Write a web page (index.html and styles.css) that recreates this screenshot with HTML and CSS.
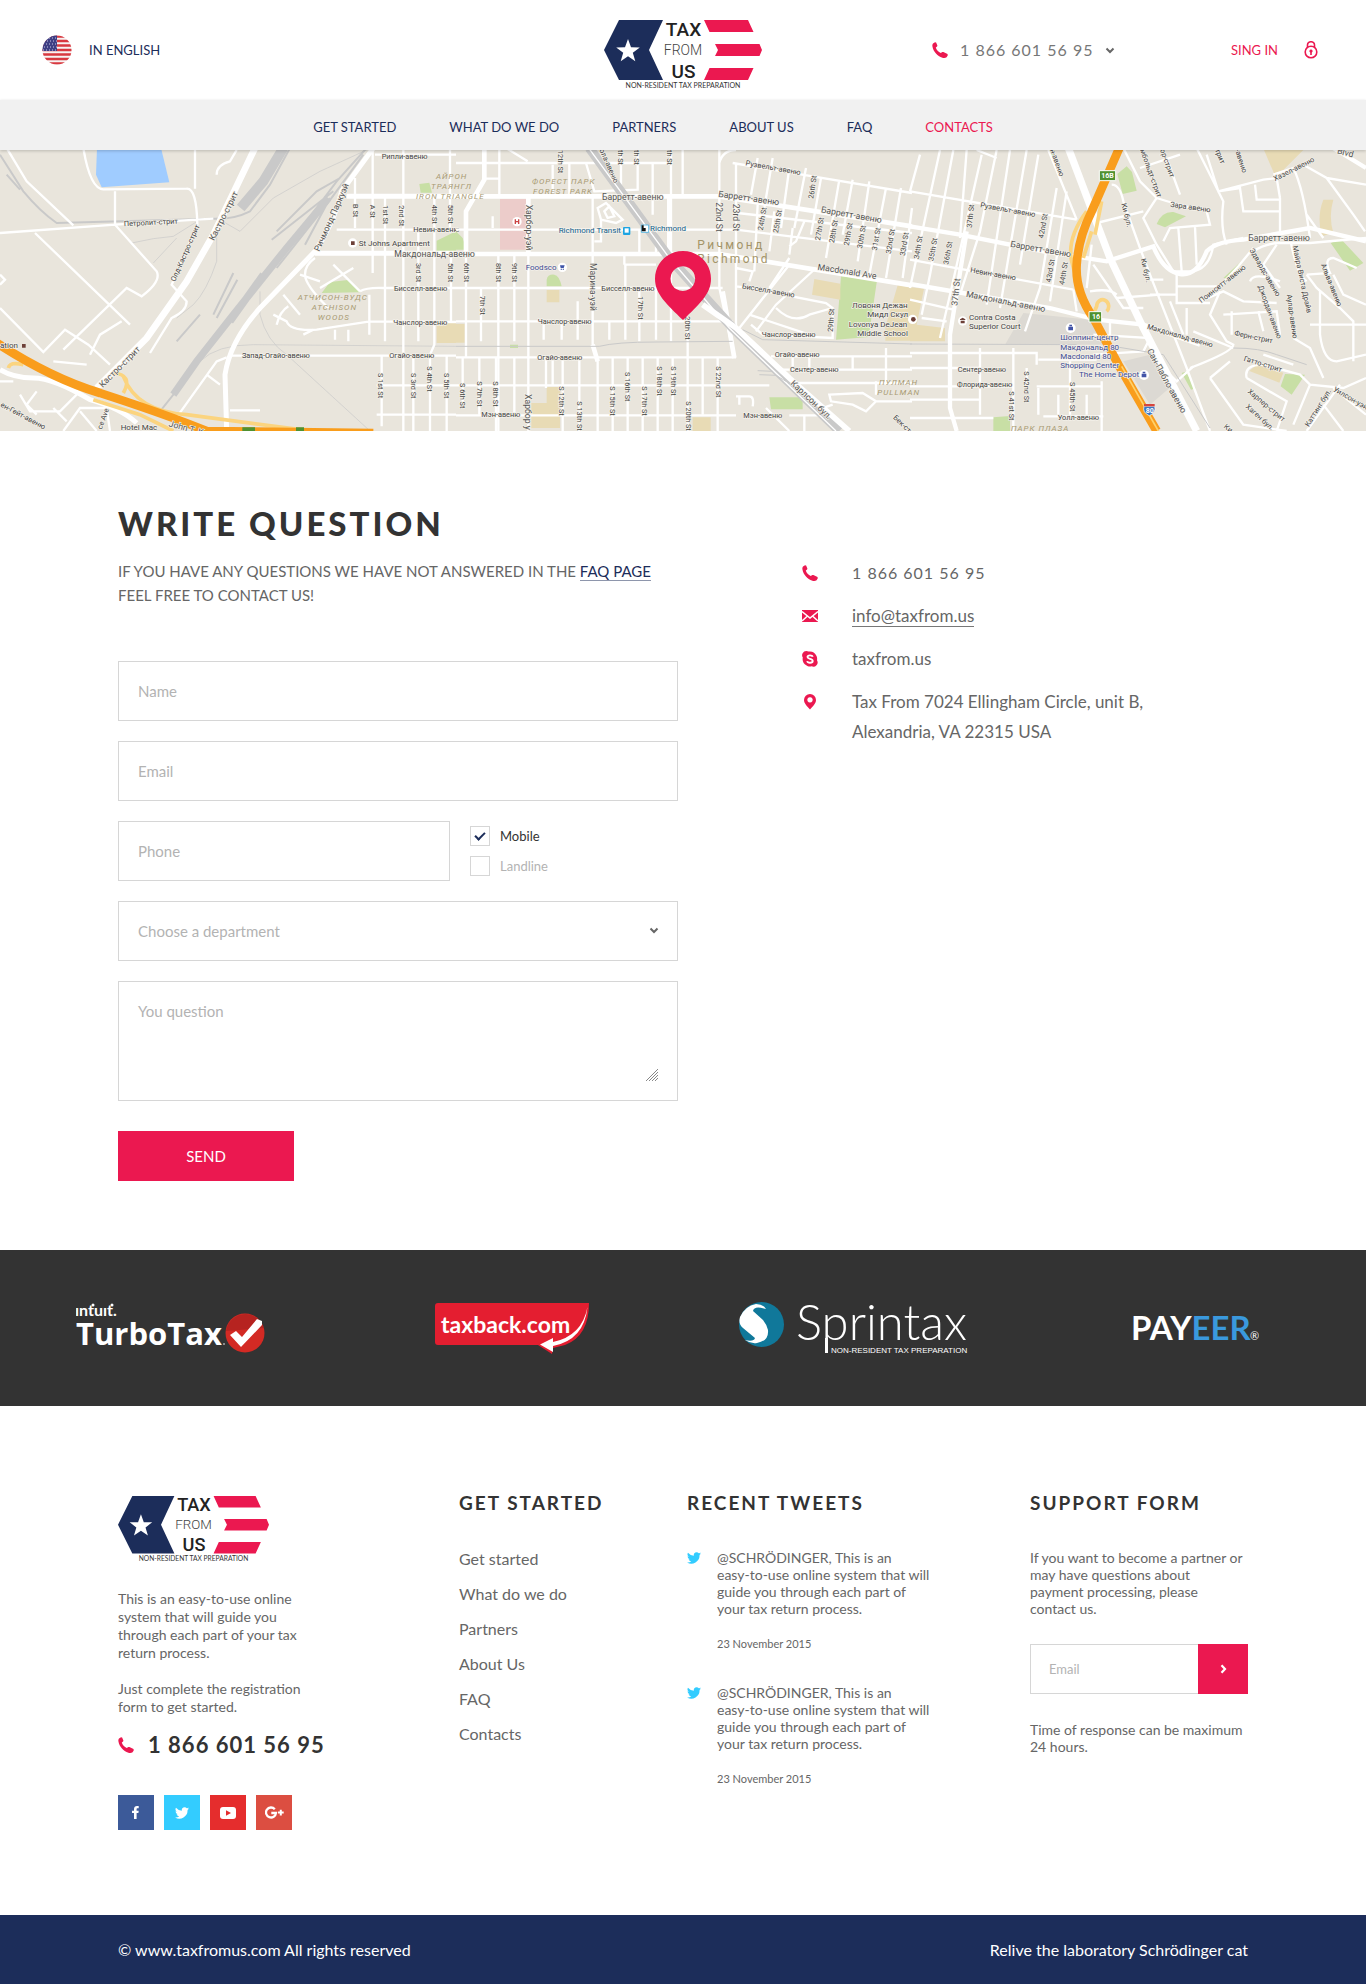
FILE: index.html
```html
<!DOCTYPE html>
<html lang="en">
<head>
<meta charset="utf-8">
<meta name="viewport" content="width=device-width, initial-scale=1">
<title>Tax From Us – Contacts</title>
<link rel="stylesheet" href="styles.css">
</head>
<body>

<svg class="defs" width="0" height="0" aria-hidden="true">
  <symbol id="phone" viewBox="0 0 16 16"><path d="M1 1.600 3 .2l1.100.3 1.300 3-.3 1-1.300 1c.6 2.300 2.600 4.500 5 5.600l1.500-1.200 1.100 0L15.500 12l.3 1.200-1.200 2c-1 .8-2.600 1-4.200.5C5.200 14 1.300 9.500.5 4.800.2 3.500.3 2.500 1 1.600z"/></symbol>
  <symbol id="bird" viewBox="0 0 24 20"><path d="M24 2.400a10 10 0 0 1-2.800.8A5 5 0 0 0 23.300.5a10 10 0 0 1-3.100 1.200 4.900 4.900 0 0 0-8.400 4.500A14 14 0 0 1 1.700 1a4.900 4.900 0 0 0 1.500 6.600A5 5 0 0 1 1 7v.1A4.900 4.900 0 0 0 4.900 12a5 5 0 0 1-2.200.1 4.900 4.900 0 0 0 4.600 3.400A9.900 9.900 0 0 1 0 17.500 14 14 0 0 0 21.500 5A10 10 0 0 0 24 2.400z"/></symbol>
</svg>

<header class="top">
  <a class="lang" href="#">
    <svg width="30" height="30" viewBox="0 0 30 30" aria-hidden="true">
      <clipPath id="round"><circle cx="15" cy="15" r="14.500"/></clipPath>
      <g clip-path="url(#round)">
        <path fill="#f7f3f3" d="M0 0h30v30H0z"/>
        <path stroke="#d8383f" stroke-width="2.300" d="M0 1.500h30M0 6h30M0 10.500h30M0 15h30M0 19.500h30M0 24h30M0 28.500h30"/>
        <path fill="#3e3f84" d="M0 0h15v16H0z"/>
        <path stroke="#c9c9e6" stroke-dasharray="1 2" d="M1 3h14M2 6h13M1 9h14M2 12h13M1 15h14"/>
      </g>
    </svg>
    IN ENGLISH
  </a>
  <a class="brand" href="#" aria-label="Tax From Us">
    <svg width="158" height="70" viewBox="0 0 158 70">
      <g id="logo">
        <path fill="#1c2d5a" d="M15 0H59L45 30 59 60H15L0 30z"/>
        <path fill="#fff" d="M24 19l3 8.300 8.800.2-7 5.300 2.500 8.500-7.300-5-7.300 5 2.500-8.500-7-5.300 8.800-.2z"/>
        <path fill="#eb1850" d="M100 0h44l5.500 12h-44zM111 24h44.500l2.500 6-2.500 6H111l3-6zM105.500 48h44L144 60h-44z"/>
        <text class="logo-strong" x="79.500" y="16" text-anchor="middle">TAX</text>
        <text class="logo-light" x="79" y="35" text-anchor="middle">FROM</text>
        <text class="logo-strong" x="79.500" y="58" text-anchor="middle">US</text>
        <text class="logo-tag" x="79" y="68" text-anchor="middle">NON-RESIDENT TAX PREPARATION</text>
      </g>
    </svg>
  </a>
  <div class="account">
    <a class="call" href="tel:18666015695">
      <svg class="pink" width="16" height="16" aria-hidden="true"><use href="#phone"/></svg>
      1 866 601 56 95
      <svg class="arrow" width="10" height="7" viewBox="0 0 10 7" aria-hidden="true"><path d="M1.500 1.500 5 5l3.500-3.500"/></svg>
    </a>
    <a class="signin" href="#">SING IN
      <svg width="14" height="18" viewBox="0 0 14 18" aria-hidden="true"><g fill="none" stroke="#eb1850" stroke-width="1.600"><circle cx="7" cy="11" r="5.800"/><path d="M3.500 6V4a3.500 3.300 0 0 1 7 0V6"/></g><path fill="#eb1850" d="M7 8.500a1.600 1.600 0 0 1 .8 3V14H6.200V11.500A1.600 1.600 0 0 1 7 8.500z"/></svg>
    </a>
  </div>
</header>

<nav class="menu">
  <a href="#">GET STARTED</a>
  <a href="#">WHAT DO WE DO</a>
  <a href="#">PARTNERS</a>
  <a href="#">ABOUT US</a>
  <a href="#">FAQ</a>
  <a class="current" href="#">CONTACTS</a>
</nav>

<svg class="map" viewBox="0 0 4098 843" preserveAspectRatio="xMidYMid slice" role="img" aria-label="Map of Richmond">
  <rect width="4098" height="843" fill="#e9e5dc"/>
  <!-- west -->
  <g transform="translate(0 -6)">
    <path fill="#a0ccff" d="M291 0H483L508 103 305 118 288 80z"/>
    <path class="park" d="M965 435 990 402 1050 395 1080 433zM1258 108l30-4 8 30h-34zM1310 278l58-28v60h-58z"/>
    <path class="school" d="M1310 525h58v60h-58z"/>
    <g class="rail">
      <path stroke-width="30" d="M850 0 790 100 722 180"/>
      <path stroke-width="6" d="M870 0 810 110 750 190Q700 215 640 212L170 225Q120 190 70 130L0 20M20 80 60 125M1100 0 1010 100 860 300 700 500 560 690 480 790M1090 20 980 170 830 360M1000 130 815 275M990 150 915 290M1020 90 950 130 830 250M700 375 640 500M712 395 650 510M530 580 600 500"/>
      <path stroke-width="22" d="M985 150 860 300 700 500 590 640 520 740M790 380 690 520"/>
      <path stroke-width="2" d="M1100 6 960 70 820 150 720 250 650 210 650 340Q620 430 580 470L530 510M395 285 460 272 520 265 600 215M460 345 530 270M780 430V500Q800 580 860 620L1110 849M600 640Q650 590 760 590L1368 595"/>
    </g>
    <g class="road">
      <path d="M0 255 345 230 640 212M20 0 80 100 220 232M250 0Q270 122 310 124L560 122Q590 120 592 230L515 410 560 460Q560 490 515 510L450 615M585 6V122M345 130V230L470 370Q485 400 425 445L380 420 190 605M105 255 390 530M0 480 130 612 195 545 265 590 330 650M160 640 260 650M365 520 300 560 270 620M0 380 15 395 0 410M650 80Q650 50 690 40L710 6"/>
      <path d="M945 330Q915 350 915 380T985 480M960 400 900 380M1000 350 1080 430M1060 360 960 420M850 440 900 500M820 500 860 520Q870 550 950 545L1110 520 1368 522M940 545 910 560M865 475Q840 490 830 530M1108 440V560M1045 545V580M1005 545V575M1080 430Q1100 418 1150 420H1368"/>
      <path d="M1040 145H1368M1010 245H1368M690 623H1368M1130 712H1368M1130 800H1368M1125 20H1368M1065 90V240M1118 6V375M1155 145V580M1210 6V849M1255 245V580M1303 145V590L1290 620V849M1350 6V250M1353 320V520M1145 623V835M1240 623V849M1340 623V849M620 680 660 710M525 815 650 640 680 628M690 787H780"/>
      <path d="M110 730 80 770 110 800M60 740 90 790 180 790 230 740M190 849 240 780 320 780M240 790 290 849M0 700 40 700M160 780 200 820M320 780 330 849"/>
    </g>
    <path class="main" stroke-width="20" d="M765 0 640 260 560 400 440 570 290 720"/>
    <path class="main" stroke-width="15" d="M1120 0 1025 130Q1005 220 945 310L780 480Q690 580 675 680L680 849M0 665Q40 690 100 690T270 755Q360 780 410 825M945 316H1368M1040 145H1368"/>
    <path class="ramp" d="M340 675Q400 680 370 735M370 685Q410 790 560 800L900 845M25 660Q30 640 70 650M280 755 420 800 520 849"/>
    <path class="freeway" d="M-20 578Q150 690 300 735 500 800 620 849L1120 855"/>
    <path fill="#4f9130" d="M727 838h38v18h-38zM888 838h24v18h-24z"/>
    <circle cx="1058" cy="285" r="14" fill="#fff"/><path fill="#6d4038" d="M1053 280h11v11h-11zM66 588h11v11H66z"/>
    <g class="label">
      <text x="372" y="235" transform="rotate(-3 372 235)">Петролит-стрит</text>
      <text x="1145" y="32">Рипли-авеню</text>
      <text x="1240" y="253">Невин-авеню</text>
      <text x="1182" y="428">Бисселл-авеню</text>
      <text x="1180" y="530">Чанслор-авеню</text>
      <text x="726" y="631">Запад-Огайо-авеню</text>
      <text x="1168" y="631">Огайо-авеню</text>
      <text transform="translate(525 402) rotate(-66)">Олд-Кастро-стрит</text>
      <text transform="translate(0 775) rotate(28)">ен-Гейт-авеню</text>
      <text transform="translate(305 845) rotate(-70)">ce Ave</text>
      <text transform="translate(1058 168) rotate(90)">B St</text>
      <text transform="translate(1111 170) rotate(90)">A St</text>
      <text transform="translate(1148 172) rotate(90)">1st St</text>
      <text transform="translate(1197 172) rotate(90)">2nd St</text>
      <text transform="translate(1297 170) rotate(90)">4th St</text>
      <text transform="translate(1345 170) rotate(90)">5th St</text>
      <text transform="translate(1247 345) rotate(90)">3rd St</text>
      <text transform="translate(1345 345) rotate(90)">5th St</text>
      <text transform="translate(1135 675) rotate(90)">S 1st St</text>
      <text transform="translate(1233 675) rotate(90)">S 3rd St</text>
      <text transform="translate(1282 655) rotate(90)">S 4th St</text>
      <text transform="translate(1332 675) rotate(90)">S 5th St</text>
    </g>
    <g class="label big">
      <text transform="translate(642 280) rotate(-63)">Кастро-стрит</text>
      <text transform="translate(308 720) rotate(-45)">Кастро-стрит</text>
      <text transform="translate(958 312) rotate(-66)">Ричмонд-Паркуэй</text>
      <text transform="translate(505 835) rotate(15)">John T. K</text>
    </g>
    <g class="label poi">
      <text x="1076" y="293">St Johns Apartment</text>
      <text x="0" y="600">ation</text>
      <text x="362" y="845">Hotel Mac</text>
    </g>
    <g class="area">
      <text x="893" y="456">АТЧИСОН-ВУДС</text>
      <text x="935" y="486">ATCHISON</text>
      <text x="953" y="516">WOODS</text>
    </g>
  </g>
  <!-- centre -->
  <g transform="translate(1368 -6)">
    <path fill="#ecccca" d="M132 153h78v152h-78z"/>
    <path class="park" d="M272 415V395Q275 378 295 380 310 382 317 415zM0 250 20 270 32 305H0zM162 590h24v10h-24zM1155 385l108 12-25 170-98 8zM940 748h100v36H945z"/>
    <path class="school" d="M272 426h38v37h-38zM0 528h26v56H0zM226 765h46v-48h40v123h-86zM710 808h54v41h-54zM1075 393l78 14v48l-85-15zM1325 412l43 6v160h-80v-40z"/>
    <g class="road">
      <path d="M0 45H650M0 245H850M0 420H800M0 520H830M0 628H840M0 712H940M0 802H840M85 92H130M110 205V240M150 0 215 40"/>
      <path d="M130 6V145M30 330V628M75 420V580M127 318V849M175 318V580M217 170V849M263 520V575M317 520V575M365 460V575M460 520V575M508 350V575M550 420V580M600 420V575M645 6V580M695 520V849M290 50V140M340 45V145M390 45 415 130 545 125V6M495 6V120M590 45V200M680 6V145"/>
      <path d="M20 628V780M70 628V800M120 628V849M175 628V800M270 628V720M290 628V712M320 628V849M370 628V849M470 628V849M515 628V849M560 628V849M605 628V849M650 628V849M740 628V800M785 628V849"/>
      <path d="M410 145V590L425 640V849M505 350H600M435 215 425 180 450 165 500 215 480 225 435 215V280H415M455 210 445 190 460 175 475 205zM505 318V350M550 245V318M600 245V318"/>
      <path d="M790 6V420L835 628M840 45V540M790 45Q800 6 840 6M830 45 1368 135M845 195 1368 255M840 245 1368 310M840 415 880 420 1110 465 1130 480V570L920 560 885 530M840 360 890 370 880 400M905 30 885 140M950 30 925 180M1000 60 975 240M1050 60 1015 240M1095 90 1065 260M1150 95 1110 330M1190 95 1160 260M1240 100 1205 340M1290 120 1240 380M1335 120 1290 390M1368 180 1340 390M1045 220 1020 280 1000 295M905 170 895 370M955 190 940 310M1010 240 1000 320"/>
      <path d="M850 540 1000 350M900 550 960 470 1080 360M960 480Q1010 530 1060 500L1130 480M940 420 1000 330M880 500 1060 560M945 625H1368M945 665H1368M1000 705H1368M1010 625V660M1060 625V660M1190 625V665M1290 600V710M840 745H880Q895 745 890 775M850 745V770M1120 740 1220 735 1260 760 1230 790 1190 770 1125 760zM1260 760H1368M1070 790 1130 770M1260 700V740M930 780 1000 849M1000 802H1100M1045 802V849"/>
    </g>
    <path class="main" stroke-width="14" d="M0 145H790L1368 235M0 318H790L1368 412M30 318V190L85 95V0M217 145V318M640 145V318M410 590 425 640M800 430 835 630"/>
    <path class="rail" stroke-width="28" d="M400 0 640 330 830 540 1150 849"/>
    <path class="main" stroke-width="4" d="M398 0 640 330 820 540 1140 849"/>
    <path class="main" stroke-width="17" d="M740 470 840 540 1000 690 1180 849"/>
    <path class="rail" stroke-width="3" d="M0 595H430Q480 582 600 582L830 580M860 545 920 575 1368 588M905 668 950 670M910 680 960 682 990 700"/>
    <circle cx="183" cy="221" r="14" fill="#fff"/><path d="M178 214v14M188 214v14M178 221h10" stroke="#c44" stroke-width="4"/>
    <circle cx="319" cy="358" r="14" fill="#fff"/><path fill="#3f55a8" d="M312 352h14l-3 8h-9zM314 362h4v3h-4zM320 362h4v3h-4z"/>
    <rect x="501" y="237" width="22" height="24" rx="3" fill="#1da4e2"/><path fill="#fff" d="M506 241h12v13h-12z"/>
    <path fill="#fff" stroke="#1da4e2" stroke-width="2" d="M556 231h22v22h-22z"/><path fill="#111" d="M557 232h6v8h6v10h-12z"/>
    <g class="label">
      <text x="868" y="52" transform="rotate(10 868 52)">Рузвельт-авеню</text>
      <text x="436" y="428">Бисселл-авеню</text>
      <text x="857" y="421" transform="rotate(10 857 421)">Бисселл-авеню</text>
      <text x="245" y="528">Чанслор-авеню</text>
      <text x="917" y="566">Чанслор-авеню</text>
      <text x="244" y="635">Огайо-авеню</text>
      <text x="956" y="628">Огайо-авеню</text>
      <text x="1002" y="672">Сентер-авеню</text>
      <text x="76" y="808">Мэн-авеню</text>
      <text x="862" y="810">Мэн-авеню</text>
      <text transform="translate(306 6) rotate(90)">12th St</text>
      <text transform="translate(430 6) rotate(66)">ола-авеню</text>
      <text transform="translate(486 6) rotate(90)">th St</text>
      <text transform="translate(535 6) rotate(90)">th St</text>
      <text transform="translate(634 6) rotate(90)">th St</text>
      <text transform="translate(24 345) rotate(90)">6th St</text>
      <text transform="translate(119 345) rotate(90)">8th St</text>
      <text transform="translate(167 345) rotate(90)">9th St</text>
      <text transform="translate(72 443) rotate(90)">7th St</text>
      <text transform="translate(545 445) rotate(90)">17th St</text>
      <text transform="translate(688 505) rotate(90)">20th St</text>
      <text transform="translate(13 705) rotate(90)">S 6th St</text>
      <text transform="translate(62 700) rotate(90)">S 7th St</text>
      <text transform="translate(112 700) rotate(90)">S 8th St</text>
      <text transform="translate(310 715) rotate(90)">S 12th St</text>
      <text transform="translate(364 760) rotate(90)">S 13th St</text>
      <text transform="translate(463 715) rotate(90)">S 15th St</text>
      <text transform="translate(508 672) rotate(90)">S 16th St</text>
      <text transform="translate(557 715) rotate(90)">S 17th St</text>
      <text transform="translate(602 655) rotate(90)">S 18th St</text>
      <text transform="translate(646 655) rotate(90)">S 19th St</text>
      <text transform="translate(690 760) rotate(90)">S 20th St</text>
      <text transform="translate(780 655) rotate(90)">S 22nd St</text>
      <text transform="translate(1130 552) rotate(-86)">29th St</text>
      <text transform="translate(1072 153) rotate(-82)">26th St</text>
      <text transform="translate(920 248) rotate(-80)">24th St</text>
      <text transform="translate(966 256) rotate(-80)">25th St</text>
      <text transform="translate(1092 278) rotate(-80)">27th St</text>
      <text transform="translate(1134 286) rotate(-80)">28th St</text>
      <text transform="translate(1178 294) rotate(-80)">29th St</text>
      <text transform="translate(1218 302) rotate(-80)">30th St</text>
      <text transform="translate(1262 308) rotate(-80)">31st St</text>
      <text transform="translate(1304 318) rotate(-80)">32nd St</text>
      <text transform="translate(1346 324) rotate(-80)">33rd St</text>
      <text transform="translate(1310 810) rotate(44)">Бек-стр</text>
    </g>
    <g class="label big">
      <text x="-185" y="326">Макдональд-авеню</text>
      <text x="438" y="156">Барретт-авеню</text>
      <text x="786" y="146" transform="rotate(8 786 146)">Барретт-авеню</text>
      <text x="1094" y="193" transform="rotate(10 1094 193)">Барретт-авеню</text>
      <text x="1084" y="365" transform="rotate(9 1084 365)">Macdonald Ave</text>
      <text transform="translate(1002 708) rotate(43)">Карлсон бул.</text>
      <text transform="translate(209 170) rotate(90)">Харбор-уэй</text>
      <text transform="translate(401 345) rotate(90)">Марина-уэй</text>
      <text transform="translate(206 738) rotate(90)">Харбор у</text>
      <text transform="translate(781 163) rotate(90)">22nd St</text>
      <text transform="translate(832 167) rotate(90)">23rd St</text>
    </g>
    <g class="label poi">
      <text x="1188" y="480">Ловоня Дежан</text>
      <text x="1234" y="508">Мидл Скул</text>
      <text x="1178" y="536">Lovonya DeJean</text>
      <text x="1204" y="564">Middle School</text>
      <text class="transit" x="308" y="256">Richmond Transit</text>
      <text class="transit" x="582" y="250">Richmond</text>
      <text class="shop" x="209" y="366">Foodsco</text>
    </g>
    <g class="area">
      <text x="-60" y="92">АЙРОН</text>
      <text x="-75" y="122">ТРАЯНГЛ</text>
      <text x="-120" y="152">IRON TRIANGLE</text>
      <text x="228" y="109">ФОРЕСТ ПАРК</text>
      <text x="231" y="139">FOREST PARK</text>
      <text x="1269" y="712">ПУЛМАН</text>
      <text x="1264" y="742">PULLMAN</text>
    </g>
    <g class="city"><text x="724" y="304">Ричмонд</text><text x="724" y="345">Richmond</text></g>
  </g>
  <!-- east -->
  <g transform="translate(2730 -6)">
    <path fill="#dcd9d3" d="M340 495 540 515 590 590H285zM640 640l80-20 70 90-70 60z"/>
    <path class="park" d="M650 55 622 78 638 138 680 128 666 72zM415 6h20l-8 28zM740 228Q755 190 790 192L828 205 765 238zM1262 285 1292 272 1360 345 1320 368zM940 390 1015 320 960 392zM815 675l12-4 30 50-14 4zM1125 678l60 2-40 60-33-25zM250 808l50-4v45h-50z"/>
    <path class="school" d="M0 418l42 4-22 108 85 10v40H0zM1062 6h118l-60 60-28 10zM1240 155h30q-15 50 0 100l-35 10q-15-60 5-110zM1040 650l80 24-12 30-90-35z"/>
    <g class="road">
      <path d="M0 130 500 215M0 335 490 425M0 455 130 485M150 270 170 6M30 20 0 130M90 6 0 420M130 6 60 380 35 500M215 20 120 440 90 570M260 6 210 250 150 440M300 6 230 470M350 6 300 300 270 480M385 20 330 350M440 120 390 420 345 550M470 130 420 460M415 6 500 215M200 6 260 30M490 425 500 490M35 510 110 520"/>
      <path d="M0 615H380V650M0 660H210M385 635H560M0 715H310M380 715H575M0 755H210M0 810H250M210 600V800M310 600V849M350 660V715M480 640V800M385 720V800M445 740V800M530 740V800M575 700V849M400 805H580"/>
      <path d="M640 0 690 100 740 150 700 210 740 290 790 370H850Q900 360 910 290L1000 270M605 110Q630 110 640 160L690 300 720 380 830 660 900 849M560 225 700 190M740 150Q800 170 890 190L900 230 780 240 760 280M770 30 810 140M690 60 810 20M860 0 940 160Q930 240 950 290M890 20 925 130 1060 95 1100 90 1110 150M925 130 990 120 1000 190H1110V155H1040L1035 110M1110 150V250M1090 80 1180 50 1250 90 1330 200 1365 250M1150 60Q1180 120 1200 270M1368 110 1250 90M1190 200 1240 270M805 240 815 370M855 235 860 350M800 380V465H900M720 440H800M720 395H760"/>
      <path d="M800 415H930L985 355 1030 300M870 460 940 430 1000 460 1100 465M930 430 900 500 950 580 970 590Q970 610 840 660M940 500 1100 490 1110 560M965 490V560M1045 490 1060 550M1030 310Q1060 290 1100 285H1200L1368 270M1020 400Q1030 370 1110 400M1100 290 1060 350 1110 420M1190 380 1260 375Q1240 330 1270 330L1340 360M1190 380 1220 420 1290 480 1330 520V640M1270 380 1300 440 1368 470M1140 270Q1160 380 1190 400M1200 530H1368M1230 430V560Q1240 640 1280 640L1368 620M1150 570 1200 600 1240 690"/>
      <path d="M730 630 800 700 850 655M900 690 960 640M900 690 1000 830 1130 849M1010 690Q1000 650 1060 650L1170 680 1200 710 1300 720 1368 690M1010 690 1130 760 1100 849M1060 620 1150 650M1200 710 1150 830M1290 710 1190 849M1270 720 1368 800M1240 770 1300 849M850 550 970 600M620 450 750 440M780 460 820 560M830 480V560M550 620 700 610 720 570 550 560M600 520V560M540 430Q600 420 620 440M545 290 530 420M550 350 640 480 700 480"/>
    </g>
    <path class="rail" stroke-width="3" d="M0 588 500 590M580 590 760 620 900 840M970 600Q1050 600 1100 620L1190 650"/>
    <path class="main" stroke-width="13" d="M0 235 150 260 400 310 590 340 730 295Q760 370 810 378T890 310Q920 280 1000 275L1200 240 1368 280M0 408 420 480 560 515 700 530 870 590M170 250 120 560V780L140 849M1270 0 1368 60"/>
    <path class="main" stroke-width="22" d="M475 0 600 330 700 540 860 849"/>
    <path class="ramp" d="M530 190Q470 270 485 340T545 490M575 160 555 260M590 490A18 20 0 1 0 560 475L545 510M545 250 520 330"/>
    <path class="freeway" stroke-width="30" d="M628 0 545 190Q505 270 500 350T550 510L625 650 740 849"/>
    <path stroke="#ffd26b" stroke-width="5" fill="none" d="M635 655 745 849"/>
    <path fill="#4f9130" stroke="#fff" stroke-width="3" d="M568 68h49v30h-49zM537 491h38v31h-38z"/>
    <path fill="#3b78c2" stroke="#fff" stroke-width="2" d="M702 775h32q6 18-16 28-22-10-16-28z"/><path fill="#d6453d" d="M702 768h32v7h-32z"/>
    <g class="shield"><text x="574" y="91">16B</text><text x="546" y="514">16</text><text x="707" y="795">80</text></g>
    <circle cx="158" cy="519" r="14" fill="#fff"/><path fill="#6d4038" d="M150 514l8-5 8 5v2h-16zM152 518h12v8h-12z"/>
    <circle cx="482" cy="540" r="15" fill="#fff"/><circle cx="702" cy="681" r="15" fill="#fff"/><path fill="#4354a8" d="M475 536h14v11h-14zM695 677h14v11h-14zM478 530h8v5h-8zM698 671h8v5h-8z"/>
    <circle cx="8" cy="514" r="14" fill="#fff"/><circle cx="10" cy="514" r="7" fill="#6d4038"/>
    <g class="label">
      <text x="210" y="178" transform="rotate(10 210 178)">Рузвельт-авеню</text>
      <text x="180" y="373" transform="rotate(10 180 373)">Невин-авеню</text>
      <text x="710" y="542" transform="rotate(16 710 542)">Макдональд-авеню</text>
      <text x="143" y="672">Сентер-авеню</text>
      <text x="141" y="718">Флорида-авеню</text>
      <text x="443" y="817">Уолл-авеню</text>
      <text x="780" y="176" transform="rotate(8 780 176)">Зара авеню</text>
      <text transform="translate(1095 100) rotate(-27)">Хазел-авеню</text>
      <text transform="translate(874 466) rotate(-38)">Поинсетт-авеню</text>
      <text x="972" y="562" transform="rotate(12 972 562)">Ферн-стрит</text>
      <text x="1000" y="638" transform="rotate(17 1000 638)">Гатто-стрит</text>
      <text transform="translate(1012 733) rotate(40)">Харпер-стрит</text>
      <text transform="translate(1006 778) rotate(42)">Хаген бул.</text>
      <text transform="translate(1196 838) rotate(-58)">Каттинг бул.</text>
      <text transform="translate(1268 728) rotate(30)">Уилсон-уэй</text>
      <text transform="translate(420 6) rotate(70)">н-авеню</text>
      <text transform="translate(690 6) rotate(70)">мбольдт-стрит</text>
      <text transform="translate(750 6) rotate(70)">ор-стрит</text>
      <text transform="translate(915 6) rotate(68)">трит</text>
      <text transform="translate(975 6) rotate(72)">-авеню</text>
      <text transform="translate(634 168) rotate(76)">Ки бул.</text>
      <text transform="translate(692 334) rotate(76)">Ки бул.</text>
      <text transform="translate(1018 306) rotate(60)">Эдвардс-авеню</text>
      <text transform="translate(1044 415) rotate(70)">Джордан-авеню</text>
      <text transform="translate(1148 295) rotate(78)">Майра Виста Драйв</text>
      <text transform="translate(1130 440) rotate(82)">Аулар-авеню</text>
      <text transform="translate(1232 350) rotate(68)">Альва-авеню</text>
      <text transform="translate(185 240) rotate(-84)">37th St</text>
      <text transform="translate(400 272) rotate(-80)">42nd St</text>
      <text transform="translate(422 404) rotate(-80)">43rd St</text>
      <text transform="translate(462 412) rotate(-80)">44th St</text>
      <text transform="translate(26 334) rotate(-80)">34th St</text>
      <text transform="translate(70 340) rotate(-80)">35th St</text>
      <text transform="translate(115 350) rotate(-80)">36th St</text>
      <text transform="translate(298 730) rotate(90)">S 41st St</text>
      <text transform="translate(343 670) rotate(90)">S 42nd St</text>
      <text transform="translate(479 702) rotate(90)">S 45th St</text>
      <text transform="translate(940 838) rotate(40)">Ки</text>
    </g>
    <g class="label big">
      <text x="300" y="296" transform="rotate(10 300 296)">Барретт-авеню</text>
      <text x="167" y="446" transform="rotate(11 167 446)">Макдональд-авеню</text>
      <text x="1015" y="278">Барретт-авеню</text>
      <text transform="translate(142 474) rotate(-84)">37th St</text>
      <text transform="translate(710 608) rotate(61)">Сан-Пабло-авеню</text>
      <text x="1280" y="16" transform="rotate(15 1280 16)">Blvd</text>
    </g>
    <g class="label poi">
      <text x="177" y="515">Contra Costa</text>
      <text x="177" y="542">Superior Court</text>
      <text class="shop" x="451" y="577">Шоппинг-центр</text>
      <text class="shop" x="451" y="605">Макдональд 80</text>
      <text class="shop" x="451" y="633">Macdonald 80</text>
      <text class="shop" x="451" y="660">Shopping Center</text>
      <text class="shop" x="507" y="688">The Home Depot</text>
    </g>
    <g class="area"><text x="303" y="849">ПАРК ПЛАЗА</text></g>
  </g>
  <path fill="#eb1850" fill-rule="evenodd" d="M2049 303C2002 303 1965 340 1965 386 1965 432 2000 462 2049 510 2098 462 2133 432 2133 386 2133 340 2096 303 2049 303zM2049 349A37 37 0 1 1 2048 349z"/>
</svg>

<main class="content">
  <section class="ask">
    <h1>WRITE QUESTION</h1>
    <p class="lead">IF YOU HAVE ANY QUESTIONS WE HAVE NOT ANSWERED IN THE <a href="#">FAQ PAGE</a><br>FEEL FREE TO CONTACT US!</p>
    <form class="form">
      <input class="field" type="text" placeholder="Name" aria-label="Name">
      <input class="field" type="email" placeholder="Email" aria-label="Email">
      <div class="phone-row">
        <input class="field" type="tel" placeholder="Phone" aria-label="Phone">
        <div class="kinds">
          <label><input type="checkbox" checked><span>Mobile</span></label>
          <label><input type="checkbox"><span>Landline</span></label>
        </div>
      </div>
      <div class="over">
        <select class="field" aria-label="Department"><option>Choose a department</option></select>
        <svg class="arrow" width="10" height="7" viewBox="0 0 10 7" aria-hidden="true"><path d="M1.500 1.500 5 5l3.500-3.500"/></svg>
      </div>
      <div class="over">
        <textarea class="field" placeholder="You question" aria-label="You question"></textarea>
        <svg class="grip" width="12" height="12" viewBox="0 0 12 12" aria-hidden="true"><path d="M0 12 12 0M3 12l9-9M6 12l6-6M9 12l3-3"/></svg>
      </div>
      <button class="send" type="submit">SEND</button>
    </form>
  </section>

  <ul class="contacts">
    <li><svg width="16" height="16" aria-hidden="true"><use href="#phone"/></svg><span class="spaced">1 866 601 56 95</span></li>
    <li><svg width="16" height="16" viewBox="0 0 16 16" aria-hidden="true"><path d="M0 2h16v12H0z"/><path fill="none" stroke="#fff" stroke-width="1.500" d="M0 3.500 8 10l8-6.500M0 13l5.500-5M16 13l-5.500-5"/></svg><span><a href="mailto:info@taxfrom.us">info@taxfrom.us</a></span></li>
    <li><svg width="16" height="16" viewBox="0 0 16 16" aria-hidden="true"><path d="M4.300 0a4.300 4.300 0 0 1 2.200.6A7.300 7.300 0 0 1 15 9.200 4.300 4.300 0 0 1 9.500 15.300 7.300 7.300 0 0 1 .8 6.600 4.300 4.300 0 0 1 4.300 0z"/><path fill="none" stroke="#fff" stroke-width="1.900" d="M10.800 5.800C10.300 4 5.600 3.700 5.500 6c0 2.200 5.200 1.500 5.200 3.900 0 2.300-5 2.400-5.500.2"/></svg><span>taxfrom.us</span></li>
    <li><svg width="16" height="16" viewBox="0 0 16 16" aria-hidden="true"><path fill-rule="evenodd" d="M8 0a6 6 0 0 1 6 6c0 3.500-3 6-6 9.500C5 12 2 9.500 2 6A6 6 0 0 1 8 0zM8 3.200A2.700 2.700 0 1 0 8.010 3.200z"/></svg><address>Tax From 7024 Ellingham Circle, unit B,<br>Alexandria, VA 22315 USA</address></li>
  </ul>
</main>

<section class="partners" aria-label="Partners">
  <a href="#" aria-label="Intuit TurboTax"><svg width="190" height="50" viewBox="0 0 190 50">
    <text class="intuit" x="-1" y="13">ıntuıt.</text>
    <circle cx="17" cy="2" r="1.500" fill="#fff"/><circle cx="36" cy="2" r="1.500" fill="#fff"/>
    <text class="turbo" x="0" y="42">TurboTax</text>
    <circle cx="148" cy="41" r="1" fill="#aaa"/>
    <circle cx="169" cy="30" r="19.500" fill="#d32a24"/><path fill="#8d1a1c" opacity=".4" d="M150 28a19.500 19.500 0 0 1 38-3Z"/>
    <path fill="#fff" d="M154 32l6-4 6 6 15-18 5 2v4L165 44z"/>
  </svg></a>
  <a href="#" aria-label="taxback.com"><svg width="154" height="51" viewBox="0 0 154 51">
    <path fill="#e41e30" d="M3 0H154Q154 33 130 42L118 45 117 51 103 42H3q-3 0-3-3V3Q0 0 3 0z"/>
    <path fill="#fff" d="M152.500 4Q149 37 118 43v6L105 41.500 118 35v4Q147 33 152.500 4z"/>
    <text class="taxback" x="6" y="30">taxback.com</text>
  </svg></a>
  <a href="#" aria-label="Sprintax"><svg width="229" height="52" viewBox="0 0 229 52">
    <circle cx="22.500" cy="22.500" r="22.500" fill="#10789a"/>
    <path fill="#fff" d="M27 7Q24 2 17 2 6 4 1 15-1 22 4 26l12 10Q15 40 6 38q6 4 12 3 12-2 11-13-1-5-5-10L14 9Q15 3 27 7z"/>
    <text class="sprint" x="57" y="38">Sprintax</text>
    <path fill="#fff" d="M86 36h3v15h-3z"/>
    <text class="sprint-tag" x="92" y="51">NON-RESIDENT TAX PREPARATION</text>
  </svg></a>
  <a href="#" aria-label="Payeer"><svg width="128" height="30" viewBox="0 0 128 30">
    <text class="payeer" x="0" y="27">PAY<tspan fill="#3a99dd">EER</tspan></text>
    <text class="reg" x="119" y="27">®</text>
  </svg></a>
</section>

<footer>
  <div class="foot">
    <section class="about">
      <svg width="151" height="67" viewBox="0 0 158 70"><use href="#logo"/></svg>
      <p>This is an easy-to-use online<br>system that will guide you<br>through each part of your tax<br>return process.</p>
      <p>Just complete the registration<br>form to get started.</p>
      <a class="hotline" href="tel:18666015695"><svg class="pink" width="16" height="16" aria-hidden="true"><use href="#phone"/></svg>1 866 601 56 95</a>
      <div class="social">
        <a class="fb" href="#" aria-label="Facebook"><svg width="8" height="13" viewBox="0 0 8 13"><path fill="#fff" d="M2 13V7H0V4.700h2V3C2 1 3.200 0 5 0h1.700v2.300H5.600c-.8 0-1 .4-1 1v1.400h2.100L6.400 7H4.600v6z"/></svg></a>
        <a class="tw" href="#" aria-label="Twitter"><svg fill="#fff" width="14" height="12"><use href="#bird"/></svg></a>
        <a class="yt" href="#" aria-label="YouTube"><svg width="16" height="12" viewBox="0 0 16 12"><rect width="16" height="12" rx="3" fill="#fff"/><path fill="#e52d2d" d="M6 3.200v5.600L11 6z"/></svg></a>
        <a class="gp" href="#" aria-label="Google Plus"><svg width="19" height="13" viewBox="0 0 19 13"><path fill="none" stroke="#fff" stroke-width="2.300" d="M9.800 3.200A5 5 0 1 0 11 7H6.300"/><path fill="#fff" d="M13 5.600h1.800V3.800h2v1.800h1.900v2h-1.900v1.800h-2V7.600H13z"/></svg></a>
      </div>
    </section>
    <section>
      <h2>GET STARTED</h2>
      <ul class="links">
        <li><a href="#">Get started</a></li>
        <li><a href="#">What do we do</a></li>
        <li><a href="#">Partners</a></li>
        <li><a href="#">About Us</a></li>
        <li><a href="#">FAQ</a></li>
        <li><a href="#">Contacts</a></li>
      </ul>
    </section>
    <section>
      <h2>RECENT TWEETS</h2>
      <div class="tweets">
        <article>
          <svg width="14" height="12" aria-hidden="true"><use href="#bird"/></svg>
          <div><p>@SCHRÖDINGER, This is an<br>easy-to-use online system that will<br>guide you through each part of<br>your tax return process.</p><time datetime="2015-11-23">23 November 2015</time></div>
        </article>
        <article>
          <svg width="14" height="12" aria-hidden="true"><use href="#bird"/></svg>
          <div><p>@SCHRÖDINGER, This is an<br>easy-to-use online system that will<br>guide you through each part of<br>your tax return process.</p><time datetime="2015-11-23">23 November 2015</time></div>
        </article>
      </div>
    </section>
    <section class="support">
      <h2>SUPPORT FORM</h2>
      <p>If you want to become a partner or<br>may have questions about<br>payment processing, please<br>contact us.</p>
      <form class="subscribe">
        <input type="email" placeholder="Email" aria-label="Email">
        <button type="submit" aria-label="Send"><svg width="7" height="10" viewBox="0 0 7 10"><path fill="none" stroke="#fff" stroke-width="2.200" d="M1.500 1.200 5 5 1.500 8.800"/></svg></button>
      </form>
      <p>Time of response can be maximum<br>24 hours.</p>
    </section>
  </div>
  <div class="bar"><span>© www.taxfromus.com All rights reserved</span><span>Relive the laboratory Schrödinger cat</span></div>
</footer>
</body>
</html>
```
FILE: styles.css
```css
* { box-sizing: border-box; }
body {
  margin: 0;
  background: #fff;
  color: #666;
  font: 15px/24px Lato, "Open Sans", sans-serif;
}
a { color: inherit; text-decoration: none; }
h1, h2, p, ul { margin: 0; padding: 0; }
ul { list-style: none; }
svg { display: block; flex: none; }
input, select, textarea, button { font: inherit; border-radius: 0; margin: 0; }
.defs { position: absolute; }
.pink { fill: #eb1850; }
.arrow path { fill: none; stroke: #666; stroke-width: 2; }

.logo-strong { font: 500 19px Roboto, sans-serif; fill: #222; }
.logo-light { font: 300 14px Roboto, sans-serif; fill: #444; }
.logo-tag { font: 7px Lato, sans-serif; fill: #333; }

.top {
  display: grid;
  grid-template-columns: 1fr auto 1fr;
  align-items: center;
  height: 100px;
  padding: 0 42px;
}
.lang { display: flex; align-items: center; gap: 17px; color: #1c2d5a; font-size: 13px; }
.brand { padding-top: 10px; }
.account { display: flex; justify-content: space-between; padding: 0 6px 0 170px; }
.call { display: flex; align-items: center; gap: 12px; color: #777; font-size: 16px; letter-spacing: 1px; }
.signin { display: flex; align-items: center; gap: 26px; color: #eb1850; font-size: 13px; }

.menu {
  position: relative;
  display: flex;
  justify-content: center;
  gap: 53px;
  height: 50px;
  padding-right: 60px;
  background: #f1f1f1;
  box-shadow: 0 1px 3px rgba(0, 0, 0, .2);
  color: #1c2d5a;
  font-size: 13px;
  line-height: 54px;
}
.menu .current { color: #eb1850; }

.map { width: 100%; height: 281px; }
.map .road, .map .main, .map .rail, .map .ramp, .map .freeway { fill: none; }
.map .road { stroke: #fff; stroke-width: 7; }
.map .main { stroke: #fff; }
.map .rail { stroke: #c9c9c9; }
.map .ramp { stroke: #fbd47f; stroke-width: 11; }
.map .freeway { stroke: #f99d1c; stroke-width: 26; }
.map .park { fill: #c8dfa5; }
.map .school { fill: #e8dbb5; }
.map text { font-family: Roboto, sans-serif; }
.map .label text { font-size: 22px; fill: #444; stroke: #f4f1ea; stroke-width: 4; paint-order: stroke; }
.map .big text { font-size: 26px; fill: #555; }
.map .poi text { font-size: 24px; }
.map .area text { font-size: 24px; font-style: italic; letter-spacing: 3px; fill: #a89a72; }
.map .city text { font-size: 36px; letter-spacing: 7px; fill: #a39468; }
.map .label .transit { fill: #11608c; }
.map .label .shop { fill: #3b4a92; }
.map .shield text { font-size: 21px; font-weight: 700; fill: #fff; }

.content {
  display: grid;
  grid-template-columns: 560fr 446fr;
  gap: 124px;
  max-width: 1130px;
  margin: 0 auto;
  padding: 72px 0 69px;
}
h1 { color: #333; font-size: 33px; font-weight: 900; line-height: 40px; letter-spacing: 3px; }
.lead { margin: 16px 0 54px; white-space: nowrap; }
.lead a { color: #1c2d5a; border-bottom: 1px solid #8e96ac; }
.form { display: grid; gap: 20px; }
.field {
  display: block;
  width: 100%;
  height: 60px;
  padding: 0 19px;
  border: 1px solid #d6d6d6;
  background: #fff;
  color: #333;
  font-size: 15px;
}
select.field { appearance: none; color: #b3b3b3; }
textarea.field { height: 120px; padding-top: 17px; resize: none; }
::placeholder { color: #b3b3b3; opacity: 1; }
.phone-row { display: grid; grid-template-columns: 332fr 208fr; gap: 20px; }
.kinds { display: grid; gap: 10px; align-content: center; color: #b3b3b3; font-size: 13px; line-height: 20px; }
.kinds label { display: flex; gap: 10px; }
.kinds input { appearance: none; width: 20px; height: 20px; border: 1px solid #d6d6d6; display: grid; place-items: center; }
.kinds input:checked::before { content: ""; width: 8px; height: 4px; margin-bottom: 3px; border: solid #1c2d5a; border-width: 0 0 2px 2px; rotate: -45deg; }
.kinds input:checked + span { color: #333; }
.over { position: relative; }
.over .arrow { position: absolute; right: 19px; top: 26px; pointer-events: none; }
.grip { position: absolute; right: 20px; bottom: 20px; stroke: #888; pointer-events: none; }
.send { width: 176px; height: 50px; margin-top: 10px; border: 0; background: #eb1850; color: #fff; font-size: 15px; }

.contacts { display: grid; gap: 13px; align-content: start; padding-top: 55px; font-size: 17px; line-height: 30px; }
.contacts li { display: flex; gap: 34px; }
.contacts svg { margin-top: 7px; fill: #eb1850; }
.contacts a { border-bottom: 1px solid #777; }
.contacts address { font-style: normal; }
.spaced { font-size: 16px; letter-spacing: 1px; }

.partners {
  display: grid;
  grid-template-columns: 359fr 305fr 392fr 127fr;
  align-items: center;
  min-height: 156px;
  padding: 0 107px 0 76px;
  background: #333;
}
.intuit { font: 700 16px Lato, sans-serif; fill: #fff; }
.turbo { font: 700 31px "Open Sans", sans-serif; fill: #fff; }
.taxback { font: 700 23px Lato, sans-serif; fill: #fff; }
.sprint { font: 300 49px Lato, sans-serif; fill: #fff; }
.sprint-tag { font: 8px "Liberation Sans", sans-serif; fill: #fff; }
.payeer { font: 700 33px Lato, sans-serif; fill: #fff; }
.reg { font: 11px Lato, sans-serif; fill: #fff; }

.foot {
  display: grid;
  grid-template-columns: minmax(0, 341fr) minmax(0, 228fr) minmax(0, 343fr) minmax(0, 218fr);
  max-width: 1130px;
  margin: 0 auto;
  padding: 85px 0;
  font-size: 14px;
  line-height: 17px;
  white-space: nowrap;
}
h2 { margin-bottom: 34px; color: #333; font-size: 19px; font-weight: 700; line-height: 24px; letter-spacing: 2px; }
.about { padding-top: 5px; line-height: 18px; }
.about > svg { margin-bottom: 27px; }
.about p + p { margin-top: 18px; }
.hotline { display: flex; align-items: center; gap: 14px; margin: 15px 0 36px; color: #333; font-size: 22px; font-weight: 700; line-height: 28px; letter-spacing: 1px; }
.social { display: flex; gap: 10px; }
.social a { display: grid; place-items: center; width: 36px; height: 35px; }
.fb { background: #3c5a99; }
.tw { background: #33ccff; }
.yt { background: #e52d2d; }
.gp { background: #dc4e41; }
.links { display: grid; gap: 16px; font-size: 16px; line-height: 19px; }
.tweets { display: grid; gap: 32px; }
.tweets article { display: flex; gap: 16px; }
.tweets svg { margin-top: 3px; fill: #33ccff; }
.tweets time { display: block; margin-top: 18px; font-size: 11px; }
.subscribe { display: flex; height: 50px; margin: 27px 0; }
.subscribe input { flex: 1; width: 0; min-width: 0; padding: 0 18px; border: 1px solid #d6d6d6; border-right: 0; font-size: 13px; }
.subscribe button { display: grid; place-items: center; width: 50px; padding: 0; border: 0; background: #eb1850; }

.bar {
  display: flex;
  justify-content: space-between;
  padding: 23px max(20px, calc(50% - 565px)) 22px;
  background: #1c2d5a;
  color: #fff;
  font-size: 16px;
}
```
